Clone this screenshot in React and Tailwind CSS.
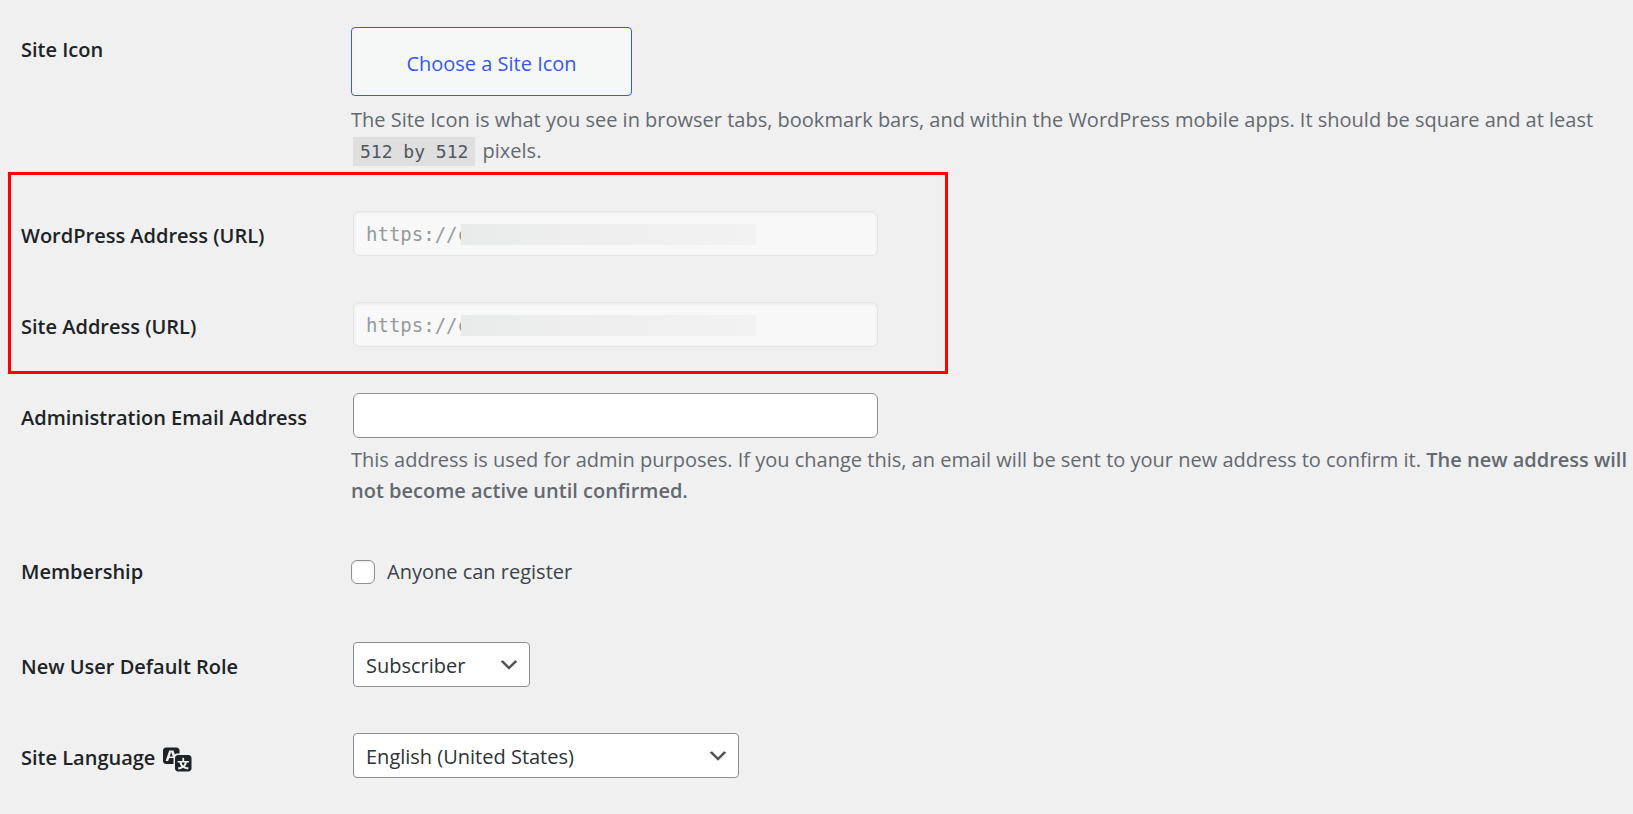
import { useState } from 'react';

function Chevron() {
    return (
        <svg viewBox="0 0 20 20" className="pointer-events-none absolute right-[9px] top-[11px] size-6" aria-hidden="true">
            <path d="M5 6l5 5 5-5 2 1-7 7-7-7 2-1z" fill="#555" />
        </svg>
    );
}

function TranslationIcon() {
    return (
        <svg viewBox="0 0 20 20" className="size-[30px] shrink-0" fill="currentColor" aria-hidden="true">
            <path d="M11 7H9.49c-.63 0-1.25.3-1.59.7L7 5H4.13l-2.39 7h1.69l.74-2H7v4H2c-1.1 0-2-.9-2-2V5c0-1.1.9-2 2-2h7c1.1 0 2 .9 2 2v2zM6.51 9H4.49l1-2.93zM10 8h7c1.1 0 2 .9 2 2v7c0 1.1-.9 2-2 2h-7c-1.1 0-2-.9-2-2v-7c0-1.1.9-2 2-2zm7.25 5v-1.08h-3.17V9.75h-1.16v2.17H9.75V13h1.28c.11.85.56 1.85 1.28 2.62-.87.36-1.89.62-2.31.62-.01.02.22.97.2 1.46.84 0 2.21-.5 3.28-1.15 1.09.65 2.48 1.15 3.34 1.15-.02-.49.2-1.44.2-1.46-.43 0-1.49-.27-2.38-.63.7-.77 1.14-1.77 1.25-2.61h1.36zm-3.81 1.93c-.5-.46-.85-1.13-1.01-1.93h2.09c-.17.8-.51 1.47-1 1.93l-.04.03s-.03-.02-.04-.03z" />
        </svg>
    );
}

function Row({ label, htmlFor, icon, className = '', children }) {
    return (
        <div className={`flex min-h-[91px] pl-[21px] ${className}`}>
            <div className="w-[330px] shrink-0 pt-8 font-semibold leading-[31px] text-[#1d2327]">
                {htmlFor ? (
                    <label htmlFor={htmlFor} className="flex items-center gap-2">{label}{icon}</label>
                ) : (
                    <span>{label}</span>
                )}
            </div>
            <div className="min-w-0 flex-1 pt-[23px] pb-[18px]">{children}</div>
        </div>
    );
}

function UrlField({ id, value }) {
    return (
        <div className="relative mx-0.5 w-[525px] max-w-full">
            <input
                id={id}
                type="url"
                disabled
                defaultValue={value}
                className="block h-[45px] w-full rounded-md border border-[#e3e4e5] bg-[#f8f8f8] px-3 font-['DejaVu_Sans_Mono',monospace] text-[19px] text-[#969a9d] shadow-[inset_0_1px_3px_rgba(0,0,0,0.06)]"
            />
            {/* hides the domain */}
            <div className="absolute left-[108px] top-[13px] h-[21px] w-[295px] bg-linear-to-r from-[#e9ebeb] via-[#eeeeee] via-40% to-[#f2f2f2]" />
        </div>
    );
}

export default function App() {
    const [email, setEmail] = useState('');
    const [canRegister, setCanRegister] = useState(false);
    const [role, setRole] = useState('subscriber');
    const [language, setLanguage] = useState('en_US');

    return (
        <form className="min-h-screen bg-[#f0f0f0] pt-0.5 font-['Open_Sans',sans-serif] text-[20px] text-[#3c434a]">
            <Row label="Site Icon" className="pb-[3px]">
                <button
                    type="button"
                    className="mt-0.5 block h-[69px] w-[281px] rounded border border-[#3858e9] bg-[#f6f7f7] pt-1 text-[#3858e9]"
                >
                    Choose a Site Icon
                </button>
                <p className="mt-2 leading-[31px] text-[#646970]">
                    The Site Icon is what you see in browser tabs, bookmark bars, and within the WordPress mobile apps. It should be square and at least{' '}
                    <code className="mx-0.5 whitespace-nowrap bg-[#dfdfe0] px-[7px] py-1 font-['DejaVu_Sans_Mono',monospace] text-[18px] text-[#50575e]">512 by 512</code>{' '}
                    pixels.
                </p>
            </Row>

            <div className="relative">
                <div className="pointer-events-none absolute -top-4 -bottom-1 left-2 w-[940px] max-w-full border-3 border-[#ff0000]" />
                <Row label="WordPress Address (URL)" htmlFor="siteurl">
                    <UrlField id="siteurl" value="https://c" />
                </Row>
                <Row label="Site Address (URL)" htmlFor="home">
                    <UrlField id="home" value="https://c" />
                </Row>
            </div>

            <Row label="Administration Email Address" htmlFor="admin-email">
                <input
                    id="admin-email"
                    type="email"
                    value={email}
                    onChange={(e) => setEmail(e.target.value)}
                    className="mx-0.5 block h-[45px] w-[525px] max-w-full rounded-md border border-[#8c8f94] bg-white px-3"
                />
                <p className="mt-1.5 leading-[31px] text-[#646970]">
                    This address is used for admin purposes. If you change this, an email will be sent to your new address to confirm it.{' '}
                    <strong className="font-semibold">The new address will not become active until confirmed.</strong>
                </p>
            </Row>

            <Row label="Membership" className="pb-3.5">
                <label className="flex items-center gap-3 pt-[9px] leading-[31px]">
                    <input
                        type="checkbox"
                        checked={canRegister}
                        onChange={(e) => setCanRegister(e.target.checked)}
                        className="size-6 appearance-none rounded-md border border-[#8c8f94] bg-white shadow-[inset_0_1px_2px_rgba(0,0,0,0.1)] checked:bg-[#3858e9]"
                    />
                    Anyone can register
                </label>
            </Row>

            <Row label="New User Default Role" htmlFor="default-role">
                <div className="relative mx-0.5 w-[177px]">
                    <select
                        id="default-role"
                        value={role}
                        onChange={(e) => setRole(e.target.value)}
                        className="block h-[45px] w-full appearance-none rounded border border-[#8c8f94] bg-white pt-0.5 pl-3 pr-9 text-[#2c3338]"
                    >
                        <option value="subscriber">Subscriber</option>
                        <option value="contributor">Contributor</option>
                        <option value="author">Author</option>
                        <option value="editor">Editor</option>
                        <option value="administrator">Administrator</option>
                    </select>
                    <Chevron />
                </div>
            </Row>

            <Row label="Site Language" htmlFor="site-language" icon={<TranslationIcon />}>
                <div className="relative mx-0.5 w-[386px] max-w-full">
                    <select
                        id="site-language"
                        value={language}
                        onChange={(e) => setLanguage(e.target.value)}
                        className="block h-[45px] w-full appearance-none rounded border border-[#8c8f94] bg-white pt-0.5 pl-3 pr-9 text-[#2c3338]"
                    >
                        <option value="en_US">English (United States)</option>
                    </select>
                    <Chevron />
                </div>
            </Row>
        </form>
    );
}
